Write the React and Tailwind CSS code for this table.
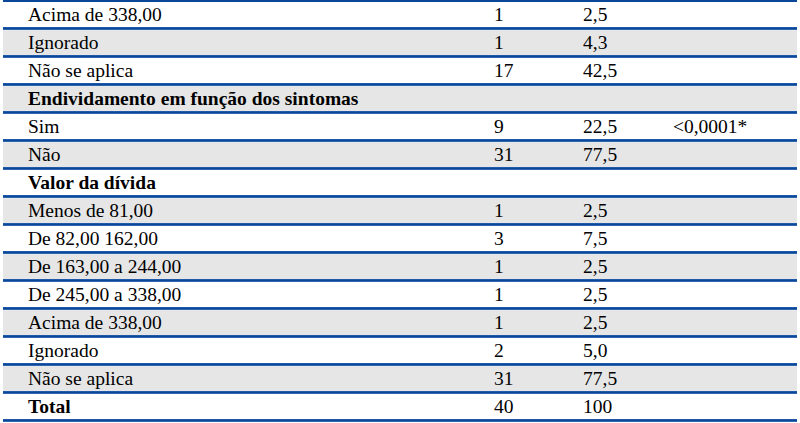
const rows = [
  { label: 'Acima de 338,00', n: '1', pct: '2,5' },
  { label: 'Ignorado', n: '1', pct: '4,3' },
  { label: 'Não se aplica', n: '17', pct: '42,5' },
  { label: 'Endividamento em função dos sintomas', bold: true },
  { label: 'Sim', n: '9', pct: '22,5', p: '<0,0001*' },
  { label: 'Não', n: '31', pct: '77,5' },
  { label: 'Valor da dívida', bold: true },
  { label: 'Menos de 81,00', n: '1', pct: '2,5' },
  { label: 'De 82,00 162,00', n: '3', pct: '7,5' },
  { label: 'De 163,00 a 244,00', n: '1', pct: '2,5' },
  { label: 'De 245,00 a 338,00', n: '1', pct: '2,5' },
  { label: 'Acima de 338,00', n: '1', pct: '2,5' },
  { label: 'Ignorado', n: '2', pct: '5,0' },
  { label: 'Não se aplica', n: '31', pct: '77,5' },
  { label: 'Total', n: '40', pct: '100', bold: true },
];

const Rule = () => (
  <div className="h-[3px] bg-[linear-gradient(to_bottom,#2f66b4,#0a4799_40%,#0a4799_70%,#5f8fce)]" />
);

export default function App() {
  return (
    <div className="w-[800px] h-[423px] bg-white overflow-hidden">
      <div className="ml-[3px] w-[794px] text-[19.5px] text-black [font-family:Liberation_Serif,Times_New_Roman,serif]">
        <div className="h-[2px] bg-[#0a4799]" />
        {rows.map((r, i) => (
          <div key={i} className={i % 2 === 1 ? 'bg-[#e6e6e6]' : 'bg-white'}>
            <div className={`grid grid-cols-[491px_89px_90px_124px] h-[25px] leading-[25px] ${r.bold ? 'font-bold' : ''}`}>
              <div className="pl-[25px] whitespace-nowrap">{r.label}</div>
              <div className="font-normal">{r.bold && r.label !== 'Total' ? '' : r.n}</div>
              <div className="font-normal">{r.pct}</div>
              <div className="font-normal">{r.p}</div>
            </div>
            <Rule />
          </div>
        ))}
      </div>
    </div>
  );
}
